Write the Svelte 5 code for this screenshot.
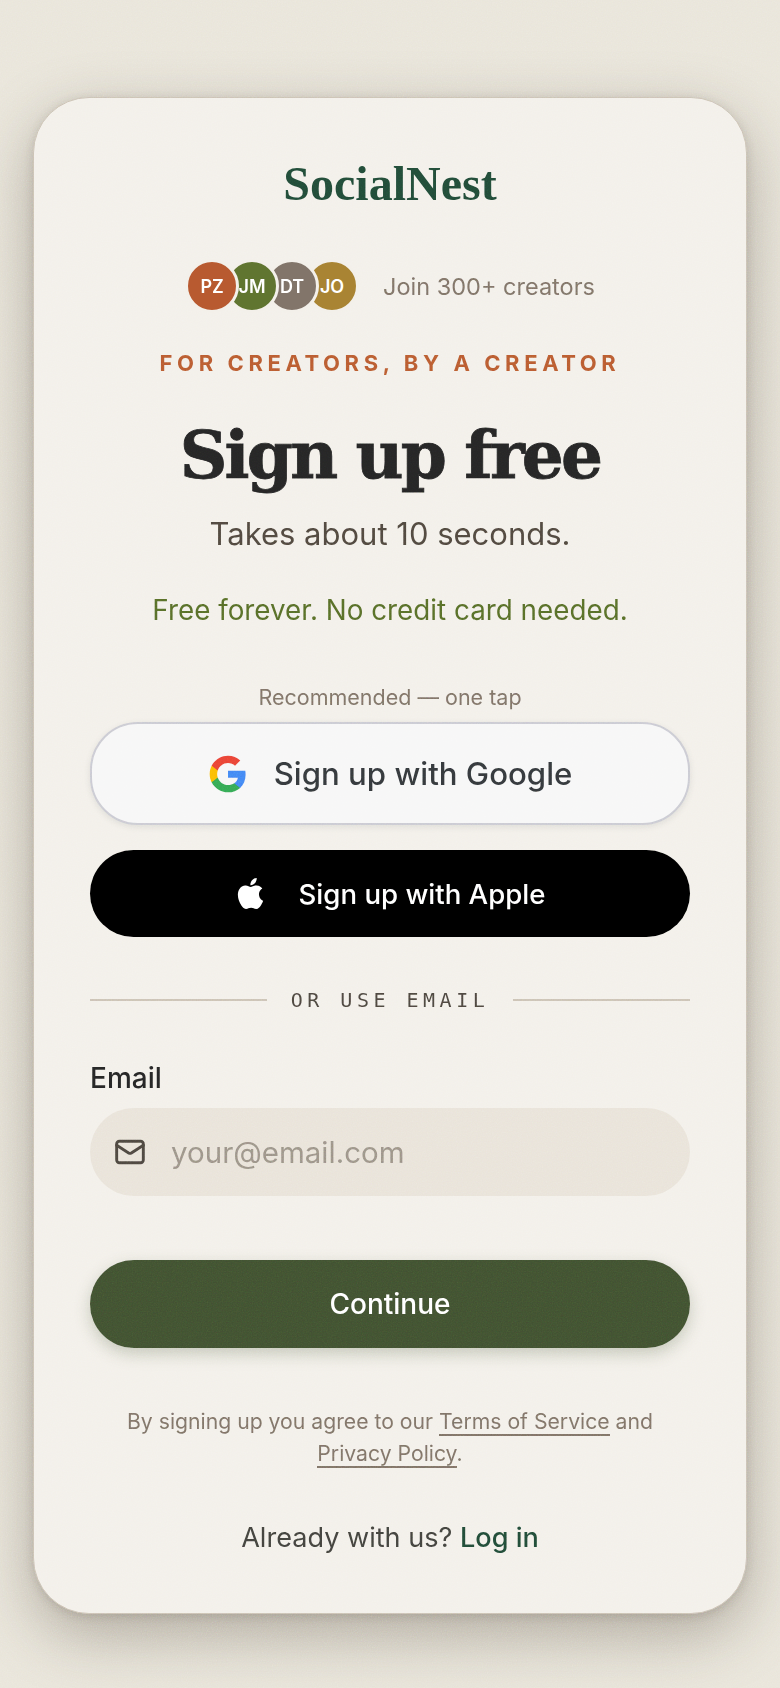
<script lang="ts">
	const avatars = [
		{initials: 'PZ', color: '#b85a30'},
		{initials: 'JM', color: '#607530'},
		{initials: 'DT', color: '#82756a'},
		{initials: 'JO', color: '#a98433'}
	];

	const noise = `url("data:image/svg+xml,%3Csvg xmlns='http://www.w3.org/2000/svg' width='300' height='300'%3E%3Cfilter id='n'%3E%3CfeTurbulence type='fractalNoise' baseFrequency='.8' numOctaves='4' stitchTiles='stitch'/%3E%3C/filter%3E%3Crect width='100%25' height='100%25' filter='url(%23n)'/%3E%3C/svg%3E")`;
</script>

<div class='page'>
	<main class='card'>
		<div class='logo'>SocialNest</div>

		<div class='social'>
			<div class='avatars'>
				{#each avatars as a, i}
					<span class='avatar' style='background: {a.color}; z-index: {4 - i}'>{a.initials}</span>
				{/each}
			</div>
			<span class='join'>Join 300+ creators</span>
		</div>

		<p class='eyebrow'>FOR CREATORS, BY A CREATOR</p>
		<h1>Sign up free</h1>
		<p class='sub'>Takes about 10 seconds.</p>
		<p class='free'>Free forever. No credit card needed.</p>

		<p class='recommended'>Recommended — one tap</p>
		<button class='google'>
			<svg viewBox='0 0 24 24' width='40' height='40'>
				<path fill='#4285F4' d='M22.56 12.25c0-.78-.07-1.53-.2-2.25H12v4.26h5.92c-.26 1.37-1.04 2.53-2.21 3.31v2.77h3.57c2.08-1.92 3.28-4.74 3.28-8.09z'/>
				<path fill='#34A853' d='M12 23c2.97 0 5.46-.98 7.28-2.66l-3.57-2.77c-.98.66-2.23 1.06-3.71 1.06-2.86 0-5.29-1.93-6.16-4.53H2.18v2.84C3.99 20.53 7.7 23 12 23z'/>
				<path fill='#FBBC05' d='M5.84 14.09c-.22-.66-.35-1.36-.35-2.09s.13-1.43.35-2.09V7.07H2.18C1.43 8.55 1 10.22 1 12s.43 3.45 1.18 4.93l3.66-2.84z'/>
				<path fill='#EA4335' d='M12 5.38c1.62 0 3.06.56 4.21 1.64l3.15-3.15C17.45 2.09 14.97 1 12 1 7.7 1 3.99 3.47 2.18 7.07l3.66 2.84c.87-2.6 3.3-4.53 6.16-4.53z'/>
			</svg>
			<span>Sign up with Google</span>
		</button>

		<button class='apple'>
			<svg viewBox='0 0 24 24' width='31' height='31' fill='#fff'>
				<path d='M12.152 6.896c-.948 0-2.415-1.078-3.96-1.04-2.04.027-3.91 1.183-4.961 3.014-2.117 3.675-.546 9.103 1.519 12.09 1.013 1.454 2.208 3.09 3.792 3.039 1.52-.065 2.09-.987 3.935-.987 1.831 0 2.35.987 3.96.948 1.637-.026 2.676-1.48 3.676-2.948 1.156-1.688 1.636-3.325 1.662-3.415-.039-.013-3.182-1.221-3.22-4.857-.026-3.04 2.48-4.494 2.597-4.559-1.429-2.09-3.623-2.324-4.39-2.376-2-.156-3.675 1.09-4.61 1.09zM15.53 3.83c.843-1.012 1.4-2.427 1.245-3.83-1.207.052-2.662.805-3.532 1.818-.78.896-1.454 2.338-1.273 3.714 1.338.104 2.715-.688 3.559-1.701'/>
			</svg>
			<span>Sign up with Apple</span>
		</button>

		<div class='divider'><span>OR USE EMAIL</span></div>

		<label class='email-label' for='email'>Email</label>
		<div class='email-field'>
			<svg viewBox='0 0 24 24' width='32' height='32' fill='none' stroke='#4c463f' stroke-width='2.2' stroke-linecap='round' stroke-linejoin='round'>
				<rect x='2' y='4' width='20' height='16' rx='2'/>
				<path d='m22 7-8.97 5.7a1.94 1.94 0 0 1-2.06 0L2 7'/>
			</svg>
			<input id='email' type='email' placeholder='your@email.com'>
		</div>

		<button class='continue'>Continue</button>

		<p class='terms'>By signing up you agree to our <a href='#terms'>Terms of Service</a> and <a href='#privacy'>Privacy Policy</a>.</p>

		<p class='login'>Already with us? <a href='#login'>Log in</a></p>
	</main>
	<div class='grain' style='background-image: {noise}'></div>
</div>

<style>
	:global(body) {
		background: #e9e5da;
	}

	.page {
		position: relative;
		height: 1688px;
		overflow: hidden;
		padding: 97px 33px 0;
		box-sizing: border-box;
		font-family: 'Inter', 'Liberation Sans', sans-serif;
	}

	.grain {
		position: absolute;
		inset: 0;
		opacity: 0.3;
		mix-blend-mode: overlay;
		pointer-events: none;
	}

	.card {
		height: 1517px;
		box-sizing: border-box;
		padding: 58px 56px 0;
		background: #f3f0ea;
		border: 1px solid #cbc2b4;
		border-radius: 56px;
		box-shadow: 0 20px 60px rgba(60, 50, 35, 0.36), 0 2px 10px rgba(60, 50, 35, 0.16);
		text-align: center;
	}

	.card p, h1 {
		margin: 0;
	}

	.logo {
		font-family: 'Liberation Serif', serif;
		font-weight: 700;
		font-size: 48px;
		line-height: 56px;
		color: #214a37;
	}

	.social {
		display: flex;
		align-items: center;
		justify-content: center;
		gap: 24px;
		margin-top: 47px;
	}

	.avatars {
		display: flex;
	}

	.avatar {
		position: relative;
		display: flex;
		align-items: center;
		justify-content: center;
		width: 54px;
		height: 54px;
		box-sizing: border-box;
		border: 3px solid #f3f0ea;
		border-radius: 50%;
		margin-left: -14px;
		color: #fff;
		font-size: 18px;
		font-weight: 600;
	}

	.avatar:first-child {
		margin-left: 0;
	}

	.join {
		font-size: 23.5px;
		color: #7d7165;
	}

	.eyebrow {
		margin-top: 36px !important;
		font-size: 22px;
		font-weight: 700;
		letter-spacing: 4.6px;
		line-height: 28px;
		color: #b85a30;
	}

	h1 {
		margin-top: 34px !important;
		font-family: 'DejaVu Serif', serif;
		font-size: 66px;
		font-weight: 700;
		letter-spacing: -2.8px;
		-webkit-text-stroke: 0.8px #252525;
		line-height: 88px;
		color: #252525;
	}

	.sub {
		margin-top: 15px !important;
		font-size: 31px;
		line-height: 40px;
		color: #4f473e;
	}

	.free {
		margin-top: 36px !important;
		font-size: 27.8px;
		line-height: 40px;
		color: #566c28;
	}

	.recommended {
		margin-top: 53px !important;
		font-size: 21.5px;
		line-height: 28px;
		color: #7d7165;
	}

	button {
		display: flex;
		align-items: center;
		justify-content: center;
		width: 100%;
		border: 0;
		border-radius: 48px;
		font-family: inherit;
	}

	.google {
		gap: 26px;
		height: 103px;
		margin-top: 11px;
		background: #f7f7f7;
		border: 2px solid #cacad2;
		box-shadow: 0 2px 6px rgba(60, 64, 67, 0.12);
		color: #34383b;
		font-size: 31.2px;
		font-weight: 500;
	}

	.apple {
		gap: 33px;
		height: 87px;
		margin-top: 25px;
		background: #000;
		color: #fff;
		font-size: 27.6px;
		font-weight: 500;
	}

	.divider {
		display: flex;
		align-items: center;
		gap: 24px;
		margin-top: 50px;
		height: 26px;
		font-family: 'DejaVu Sans Mono', monospace;
		font-size: 20px;
		letter-spacing: 4.5px;
		color: #4c463f;
	}

	.divider::before, .divider::after {
		content: '';
		flex: 1;
		height: 2px;
		background: #cbc2b4;
	}

	.email-label {
		display: block;
		margin-top: 47px;
		text-align: left;
		font-size: 28px;
		font-weight: 500;
		line-height: 36px;
		color: #252525;
	}

	.email-field {
		display: flex;
		align-items: center;
		gap: 23px;
		height: 88px;
		margin-top: 12px;
		padding-left: 24px;
		background: #e9e3d9;
		border-radius: 44px;
	}

	input {
		flex: 1;
		min-width: 0;
		border: 0;
		outline: 0;
		background: transparent;
		font-family: inherit;
		font-size: 29.5px;
		color: #2c2c2c;
	}

	input::placeholder {
		color: #9a9286;
	}

	.continue {
		height: 88px;
		margin-top: 64px;
		background: #405030;
		box-shadow: 0 6px 16px rgba(71, 89, 53, 0.28);
		color: #fff;
		font-size: 28px;
		font-weight: 500;
	}

	.terms {
		margin-top: 57px !important;
		padding: 0 20px;
		font-size: 21.2px;
		line-height: 32px;
		color: #7d7165;
	}

	.terms a {
		color: inherit;
		text-decoration: none;
		border-bottom: 2px solid #7d7165;
	}

	.login {
		margin-top: 51px !important;
		font-size: 27.1px;
		line-height: 36px;
		color: #42423d;
	}

	.login a {
		color: #214a37;
		font-weight: 500;
		text-decoration: none;
	}
</style>
